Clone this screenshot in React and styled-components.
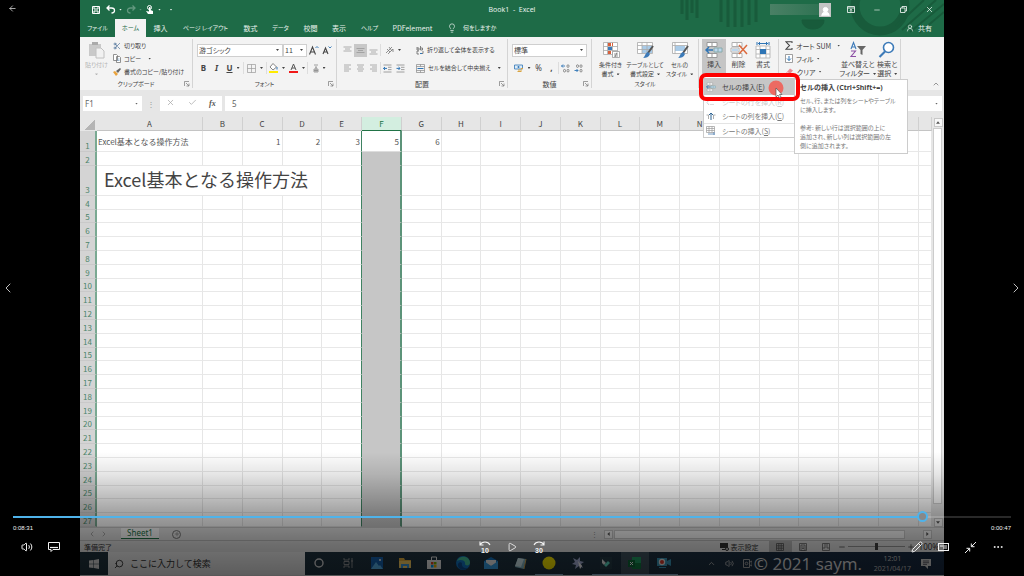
import React from "react";
import styled, { createGlobalStyle, css } from "styled-components";
import {
  ArrowLeft, ChevronLeft, ChevronRight, ChevronUp, Search, Scissors, Lightbulb, Volume2,
  Minus, X, Check, Plus, Play, Pencil, Ellipsis, UserRound,
} from "lucide-react";

const ui = `"Noto Sans", "Noto Sans CJK JP", sans-serif`;
const jp = `"Noto Sans CJK JP", sans-serif`;

const Global = createGlobalStyle`
  * { box-sizing: border-box; }
  body { margin: 0; background: #000; font-family: ${jp}; }
  button, input, select { font: inherit; color: inherit; margin: 0; padding: 0; border: 0; background: none; border-radius: 0; }
  button { cursor: pointer; }
  input, select { outline: 0; min-width: 0; }
`;

const Player = styled.main`
  position: relative;
  display: flex;
  min-height: 100vh;
  overflow: hidden;
  background: #000;
`;
const Side = styled.div`
  flex: 0 0 80px;
  display: grid;
  grid-template-rows: 1fr 16px 1fr;
  justify-items: ${(p) => (p.$end ? "end" : "start")};
  color: #ddd;
`;
const SideButton = styled.button`
  display: flex;
  align-items: center;
  justify-content: center;
  width: ${(p) => (p.$row === 1 ? 24 : 16)}px;
  height: 16px;
  grid-row: ${(p) => p.$row};
`;
const Excel = styled.section`
  position: relative;
  flex: 1;
  min-width: 0;
  display: flex;
  flex-direction: column;
  background: #e6e6e6;
  color: #444;
  font-size: 7px;
  line-height: 10px;
  font-feature-settings: "palt";
`;

/* Title bar and tabs */
const Header = styled.header`
  position: relative;
  background: #1e6b47;
  color: #e8f1ec;
`;
const Pattern = styled.svg`
  position: absolute;
  top: 0;
  right: 0;
`;
const TitleBar = styled.div`
  position: relative;
  display: grid;
  grid-template-columns: 1fr auto 1fr;
  align-items: center;
  height: 19px;
`;
const QuickAccess = styled.div`
  display: flex;
  align-items: center;
  gap: 4px;
  padding-left: 10px;
`;
const QuickButton = styled.button`
  display: flex;
  align-items: center;
  justify-content: center;
  gap: 3px;
  min-width: 12px;
  opacity: ${(p) => (p.$dim ? 0.3 : 1)};
`;
const Title = styled.h1`
  margin: 0;
  font: 400 7px/10px ${ui};
  white-space: pre;
`;
const WindowButtons = styled.div`
  display: flex;
  justify-content: flex-end;
  align-items: center;
  padding-right: 2px;
`;
const Account = styled.div`
  width: 49px;
  height: 11px;
  background: linear-gradient(90deg, #4a8065, #2f7353);
`;
const Avatar = styled.div`
  display: flex;
  align-items: flex-end;
  justify-content: center;
  width: 12px;
  height: 14px;
  margin-right: 7px;
  background: #c4c4c4;
  color: #fff;
`;
const WindowButton = styled.button`
  display: flex;
  justify-content: center;
  width: 26px;
`;
const Tabs = styled.nav`
  position: relative;
  display: flex;
  align-items: stretch;
  height: 18px;
`;
const Tab = styled.button`
  width: ${(p) => p.$w}px;
  font-size: ${(p) => (p.$kana ? 6 : 7)}px;
  white-space: nowrap;
  ${(p) => p.$on && css`background: #f3f3f3; color: #1e6b47;`}
`;
const TellMe = styled.button`
  display: flex;
  align-items: center;
  gap: 6px;
  margin-left: 8px;
  font-size: 6px;
`;
const Share = styled.button`
  display: flex;
  align-items: center;
  gap: 4px;
  margin-left: auto;
  margin-right: 12px;
`;

/* Ribbon */
const Ribbon = styled.div`
  display: flex;
  height: 53px;
  background: #f3f3f3;
`;
const Group = styled.section`
  position: relative;
  flex: 0 0 ${(p) => p.$w}px;
  min-width: 0;
  width: ${(p) => p.$w}px;
  display: flex;
  flex-direction: column;
  margin: 2px 0;
  padding-top: ${(p) => p.$top || 0}px;
  border-right: 1px solid #d4d4d4;
`;
const GroupBody = styled.div`
  flex: 1;
  display: flex;
  align-items: flex-start;
  gap: ${(p) => p.$gap || 0}px;
  padding: 0 ${(p) => p.$pad || 0}px;
  font-size: ${(p) => (p.$small ? 6 : 7)}px;
`;
const GroupLabel = styled.div`
  position: relative;
  height: 8px;
  line-height: 8px;
  font-size: ${(p) => (p.$small ? 6 : 7)}px;
  text-align: center;
`;
const Launcher = styled.button`
  position: absolute;
  right: 2px;
  top: 1px;
  width: 6px;
  height: 6px;
  display: flex;
`;
const Stack = styled.div`
  display: flex;
  flex-direction: column;
  gap: ${(p) => p.$gap || 0}px;
`;
const Line = styled.div`
  display: flex;
  align-items: center;
  height: 14px;
`;
const Command = styled.button`
  display: flex;
  align-items: center;
  gap: 3px;
  height: ${(p) => p.$h || 13}px;
  line-height: 10px;
  white-space: nowrap;
`;
const BigCommand = styled.button`
  flex: none;
  display: flex;
  flex-direction: column;
  align-items: center;
  justify-content: flex-start;
  width: ${(p) => p.$w}px;
  height: ${(p) => (p.$on ? 40 : 38)}px;
  padding-top: 2px;
  line-height: 9px;
  white-space: nowrap;
  color: ${(p) => (p.$dim ? "#b5b5b5" : "#444")};
  background: ${(p) => (p.$on ? "#c5c5c5" : "none")};
  svg { flex: none; margin-bottom: 1px; }
`;
const Caret = styled.span`
  display: inline-block;
  flex: none;
  width: 3px;
  height: 2px;
  margin-left: ${(p) => p.$gap || 0}px;
  background: currentColor;
  clip-path: polygon(0 0, 100% 0, 50% 100%);
  vertical-align: middle;
`;
const Tool = styled.button`
  display: flex;
  flex: none;
  align-items: center;
  justify-content: center;
  gap: 4px;
  width: ${(p) => p.$w || 13}px;
  height: 13px;
  font: ${(p) => (p.$plain ? 400 : 700)} 8px/12px ${ui};
  background: ${(p) => (p.$on ? "#c8c8c8" : "none")};
`;
const Picker = styled.label`
  display: flex;
  align-items: center;
  width: ${(p) => p.$w}px;
  height: 13px;
  padding: 0 3px 0 1px;
  background: #fff;
  border: 1px solid #cfcfcf;
  select { flex: 1; appearance: none; }
`;
const Rule = styled.span`
  width: 1px;
  height: 12px;
  background: #ddd;
`;
const Collapse = styled.button`
  margin: auto 4px 0 auto;
  color: #666;
`;

/* Insert menu */
const Menu = styled.div`
  position: absolute;
  z-index: 3;
  left: 4px;
  top: 36px;
  width: 94px;
  padding-top: 2px;
  background: #fff;
  border: 1px solid #ccc;
`;
const MenuItem = styled.button`
  display: flex;
  align-items: center;
  gap: 6px;
  width: 100%;
  height: ${(p) => (p.$on ? 17 : 14)}px;
  padding-left: 2px;
  white-space: nowrap;
  color: ${(p) => (p.$faint ? "#ccc" : p.$on ? "#444" : "#777")};
  background: ${(p) => (p.$on ? "#c6c6c6" : "none")};
  border-top: ${(p) => (p.$ruled ? "1px solid #e4e4e4" : "0")};
`;
const Marker = styled.div`
  position: absolute;
  z-index: 5;
  left: 0;
  top: 34px;
  width: 101px;
  height: 28px;
  border: 4px solid #fe0000;
  border-radius: 7px;
  pointer-events: none;
`;
const Pointer = styled.svg`
  position: absolute;
  z-index: 6;
  left: 69px;
  top: 41px;
`;
const Tip = styled.aside`
  position: absolute;
  z-index: 4;
  left: 95px;
  top: 40px;
  width: 114px;
  height: 75px;
  padding: 3px 5px;
  background: #fff;
  border: 1px solid #ccc;
  color: #777;
  font-size: 6px;
  line-height: 9px;
  white-space: nowrap;
  h2 { margin: 0 0 3px; font: 700 7px/10px ${ui}; color: #444; }
  p { margin: 0 0 9px; }
`;

/* Formula bar */
const FormulaBar = styled.div`
  display: flex;
  align-items: center;
  gap: 3px;
  margin: 6px 2px 6px 3px;
  height: 15px;
  font: 400 8px/12px ${ui};
  color: #666;
`;
const NameBox = styled.label`
  display: flex;
  align-items: center;
  width: 59px;
  height: 15px;
  padding: 0 4px 0 2px;
  background: #fff;
  input { flex: 1; }
`;
const Dots = styled.span`
  width: 12px;
  text-align: center;
  color: #999;
`;
const EntryTools = styled.div`
  display: flex;
  align-items: center;
  justify-content: space-around;
  width: 62px;
  height: 15px;
  background: #fff;
  color: #aaa;
`;
const FxButton = styled.button`
  font: italic 700 8px/12px "Liberation Serif", serif;
  color: #555;
`;
const FormulaBox = styled.label`
  flex: 1;
  display: flex;
  align-items: center;
  height: 15px;
  padding: 0 4px 0 7px;
  background: #fff;
  input { flex: 1; }
`;

/* Sheet */
const SheetArea = styled.div`
  display: flex;
  background: #e6e6e6;
`;
const Sheet = styled.table`
  flex: 1;
  width: 100%;
  table-layout: fixed;
  border-collapse: separate;
  border-spacing: 0;
  background: #fff;
  font: 400 8px/11px ${jp};
  font-feature-settings: normal;
  color: #555;
  th, td { padding: 0; font-weight: 400; }
`;
const Corner = styled.td`
  background: linear-gradient(135deg, transparent 50%, #b5b5b5 50%) no-repeat right 2px center / 11px 11px, #e6e6e6;
`;
const ColHead = styled.th`
  height: 14px;
  background: ${(p) => (p.$on ? "#d3eee0" : "#e6e6e6")};
  color: ${(p) => (p.$on ? "#217346" : "#444")};
  border-right: 1px solid #d0d0d0;
  border-bottom: 1px solid ${(p) => (p.$on ? "#217346" : "#c4c4c4")};
  line-height: 13px;
`;
const Row = styled.tr`
  height: ${(p) => p.$h}px;
`;
const RowHead = styled.th`
  background: #d4d4d4;
  color: #4b8469;
  vertical-align: bottom;
  border-right: 2px solid #7aa992;
  border-bottom: 1px solid #c9c9c9;
`;
const Cell = styled.td`
  border-right: 1px solid #e6e6e6;
  border-bottom: 1px solid #e8e8e8;
  text-align: ${(p) => (p.$num ? "right" : "left")};
  white-space: nowrap;
  ${(p) => p.$before && css`border-right: 1px solid #3f8262;`}
  ${(p) => p.$sel && css`
    background: ${p.$active ? "#fff" : "#c6c6c6"};
    border-right: 2px solid #5c9379;
    border-bottom-color: ${p.$active ? "#ddd" : "#c6c6c6"};
  `}
  && { padding: 0 ${(p) => (p.$big ? 7 : 1)}px; }
  ${(p) => p.$big && css`font-size: 18px; line-height: 26px; color: #444; vertical-align: top;`}
`;
const ScrollY = styled.div`
  display: flex;
  flex-direction: column;
  align-items: center;
  width: 12px;
  padding: 1px 0 0;
`;
const ScrollX = styled.div`
  flex: 0 0 328px;
  display: flex;
  align-items: center;
  height: 9px;
  margin-right: 12px;
`;
const ScrollButton = styled.button`
  flex: none;
  display: flex;
  align-items: center;
  justify-content: center;
  width: 9px;
  height: 9px;
  background: #f8f8f8;
  border: 1px solid #c8c8c8;
`;
const Arrow = styled.span`
  width: 4px;
  height: 4px;
  background: #555;
  clip-path: ${(p) => ({
    up: "polygon(50% 20%, 100% 80%, 0 80%)",
    down: "polygon(0 20%, 100% 20%, 50% 80%)",
    left: "polygon(20% 50%, 80% 0, 80% 100%)",
    right: "polygon(20% 0, 80% 50%, 20% 100%)",
  })[p.$dir]};
`;
const Thumb = styled.span`
  flex: ${(p) => (p.$y ? "0 1 376px" : 1)};
  align-self: stretch;
  margin: ${(p) => (p.$y ? "1px 2px auto 1px" : "0 18px 0 1px")};
  background: #fff;
  border: 1px solid #ccc;
`;

const SheetTabs = styled.div`
  display: flex;
  align-items: center;
  height: 13px;
  padding-left: 8px;
  border-top: 1px solid #c8c8c8;
  color: #888;
`;
const SheetNav = styled.div`
  display: flex;
  gap: 4px;
  width: 33px;
`;
const SheetTab = styled.button`
  align-self: flex-start;
  width: 38px;
  height: 11px;
  background: #fff;
  color: #217346;
  border-bottom: 1px solid #217346;
  font: 400 8px/10px ${ui};
`;
const AddSheet = styled.button`
  display: flex;
  align-items: center;
  justify-content: center;
  width: 9px;
  height: 9px;
  margin-left: 13px;
  border: 1px solid #777;
  border-radius: 50%;
  color: #666;
`;
const Grip = styled.span`
  margin-left: auto;
  margin-right: 6px;
`;
const StatusBar = styled.div`
  display: flex;
  align-items: center;
  height: 12px;
  padding: 0 5px 0 4px;
  border-top: 1px solid #c0c0c0;
  color: #333;
`;
const ViewSettings = styled.button`
  display: flex;
  align-items: center;
  gap: 2px;
  margin-left: auto;
  margin-right: 10px;
`;
const ViewButton = styled.button`
  display: flex;
  align-items: center;
  justify-content: center;
  width: 23px;
  height: 11px;
  background: ${(p) => (p.$on ? "#bcbcbc" : "none")};
`;
const ZoomRange = styled.input`
  appearance: none;
  width: 57px;
  height: 8px;
  margin: 0 2px;
  background: linear-gradient(#999, #999) center / 100% 1px no-repeat;
  &::-webkit-slider-thumb { appearance: none; width: 3px; height: 7px; background: #444; }
`;
const ZoomValue = styled.span`
  margin-left: 4px;
  font: 400 8px/10px ${ui};
`;

/* Windows taskbar */
const Taskbar = styled.footer`
  position: relative;
  display: flex;
  align-items: stretch;
  height: 23px;
  background: linear-gradient(90deg, #20343f, #1f3342 60%, #182a42);
  color: #ccc;
`;
const Start = styled.button`
  display: flex;
  align-items: center;
  justify-content: center;
  width: 28px;
`;
const TaskSearch = styled.label`
  display: flex;
  align-items: center;
  gap: 6px;
  width: 197px;
  padding-left: 6px;
  background: #f2f2f2;
  color: #222;
  svg { transform: scaleX(-1); }
  input { flex: 1; font: 400 9px/14px ${jp}; }
  input::placeholder { color: #333; opacity: 1; }
`;
const Apps = styled.div`
  display: flex;
  flex: 0 0 373px;
`;
const TaskButton = styled.button`
  flex: 1;
  display: flex;
  align-items: center;
  justify-content: center;
  background: ${(p) => (p.$on ? "#40535f" : "none")};
  border-bottom: 1px solid ${(p) => (p.$open ? "#8fb4d4" : "transparent")};
`;
const Tray = styled.div`
  display: flex;
  align-items: center;
  gap: 10px;
  margin-left: auto;
  padding-right: 13px;
`;
const TrayIcons = styled.div`
  display: flex;
  align-items: center;
  gap: 9px;
  width: 157px;
`;
const Clock = styled.time`
  font: 400 7px/10px ${ui};
  text-align: center;
  color: #c4c4c4;
`;
const Watermark = styled.div`
  position: absolute;
  right: 82px;
  bottom: 0;
  font: 400 17px/23px "Open Sans", sans-serif;
  color: #e6e6e6;
  white-space: nowrap;
`;

/* Playback overlay */
const Overlay = styled.div`
  position: absolute;
  z-index: 10;
  left: 0;
  right: 0;
  bottom: 0;
  height: 124px;
  padding: 59px 13px 0;
  color: #f2f2f2;
  background: linear-gradient(rgba(0,0,0,0), rgba(0,0,0,.1) 18%, rgba(0,0,0,.38) 51%, rgba(0,0,0,.53) 75%, rgba(0,0,0,.62));
`;
const Seek = styled.input`
  display: block;
  appearance: none;
  width: 100%;
  height: 11px;
  background: linear-gradient(90deg, #4fb3ea ${(p) => p.$at}%, rgba(255,255,255,.16) ${(p) => p.$at}%) center / 100% 2px no-repeat;
  &::-webkit-slider-thumb {
    appearance: none;
    box-sizing: border-box;
    width: 11px;
    height: 11px;
    border: 2px solid #4fb3ea;
    border-radius: 50%;
    background: #888;
  }
`;
const Times = styled.div`
  display: flex;
  justify-content: space-between;
  margin-top: 1px;
  font: 400 6px/10px "Liberation Sans", sans-serif;
`;
const Controls = styled.div`
  display: grid;
  grid-template-columns: 1fr auto 1fr;
  margin-top: 6px;
`;
const ControlSet = styled.div`
  display: flex;
  justify-content: ${(p) => (p.$end ? "flex-end" : "flex-start")};
`;
const Control = styled.button`
  display: flex;
  align-items: center;
  justify-content: center;
  width: 27px;
  height: 16px;
`;

const Art = ({ w = 12, h = 12, box, children }) => (
  <svg width={w} height={h} viewBox={box || `0 0 ${w} ${h}`} fill="none" aria-hidden="true">{children}</svg>
);

const Clipboard = () => (
  <Art w={17} h={18}>
    <path d="M1 3h12v12H1z" fill="#c9c9c9" /><path d="M4 1h6v3H4z" fill="#aaa" />
    <path d="M8 7h5l3 3v7H8z" fill="#f1f1f1" stroke="#c0c0c0" />
  </Art>
);
const CopyIcon = () => (
  <Art w={8} h={9}>
    <path d="M.5.5h3l1 1v5h-4zM3.5 2.5h3l1 1v5h-4z" fill="#fff" stroke="#777" strokeWidth=".8" />
    <path d="M4.5 5h2M4.5 6.5h2" stroke="#5b8fc0" strokeWidth=".6" />
  </Art>
);
const Brush = () => (
  <Art w={8} h={8}><path d="M0 4l2-1 3 3-2 2z" fill="#e9a23b" /><path d="M3 3l2 2 3-4-1-1z" fill="#666" /></Art>
);
const LaunchIcon = () => (
  <Art w={6} h={6}><path d="M.5 5V.5H5M2 2l3 3M5 2.5V5H2.5" stroke="#777" strokeWidth=".7" /></Art>
);
const Lines = ({ rows, widths }) => (
  <Art w={9} h={9}>
    {rows.map((y, i) => <path key={y} d={`M${widths[i][0]} ${y}H${widths[i][1]}`} stroke="#999" strokeWidth=".8" />)}
  </Art>
);
const Indent = ({ flip }) => (
  <Art w={9} h={9}>
    <path d="M.5 1h8M5 3.3h3.5M5 5.6h3.5M.5 8h8" stroke="#888" strokeWidth=".8" />
    <path d={flip ? "M.5 4.4H4M2.5 3L4 4.4 2.5 6" : "M4 4.4H.5M2 3L.5 4.4 2 6"} stroke="#2f75b5" />
  </Art>
);
const Wrap = () => (
  <Art w={8} h={9}><path d="M1 1v3h2V2H1M4.500 0v4h2V2h-2M3 5H1v3h2M5 7.500h2V5" stroke="#666" strokeWidth=".8" /><path d="M4 7.500h2" stroke="#2f75b5" /></Art>
);
const Merge = () => (
  <Art w={9} h={9}><path d="M.5.5h8v8h-8zM.5 2.500h8M.5 6.500h8M4.500.5v2M4.500 6.500v2" stroke="#888" strokeWidth=".7" /><path d="M1.500 4.500h6" stroke="#2f75b5" /></Art>
);
const Borders = () => (
  <Art w={9} h={9}><path d="M.5.5h8v8h-8zM4.500.5v8M.5 4.500h8" stroke="#999" strokeWidth=".7" /></Art>
);
const Fill = () => (
  <Art w={9} h={10}><path d="M4 .5l3.500 3.500L4 7 1 4z" fill="#fff" stroke="#666" strokeWidth=".8" /><path d="M8 4v2.500" stroke="#2f75b5" /><path d="M0 8h9v2H0z" fill="#ffeb00" /></Art>
);
const FontColor = () => (
  <Art w={9} h={10}><path d="M2 7l2.500-6L7 7M3 5h3" stroke="#555" /><path d="M0 8h9v2H0z" fill="#f01818" /></Art>
);
const GrowFont = ({ shrink }) => (
  <Art w={10} h={11}>
    <path d={shrink ? "M1 9l2.500-6L6 9M2 7h3" : "M.5 9.500l3-7.500 3 7.500M1.700 7h3.600"} stroke="#444" strokeWidth="1.100" />
    <path d={shrink ? "M6.500 1.500l1.500 1.500 1.500-1.500" : "M6.500 3L8 1.500 9.500 3"} stroke="#2f75b5" strokeWidth=".9" />
  </Art>
);
const Money = () => (
  <Art w={10} h={9}><path d="M.5 1h8v4h-8z" fill="#dcebf7" stroke="#2f75b5" strokeWidth=".8" /><circle cx="4.500" cy="3" r="1" fill="#2f75b5" /><path d="M4 6h4M3.500 7.500h4M7 4.500h2" stroke="#d9a441" /></Art>
);
const Decimal = ({ flip }) => (
  <Art w={10} h={9}>
    <path d={flip ? "M.5 6.500H4M2.500 5L4 6.500 2.500 8" : "M4 2H.5M2 .5L.5 2 2 3.500"} stroke="#2f75b5" strokeWidth=".9" />
    <rect x="6" y=".8" width="2" height="2.600" rx="1" stroke="#666" strokeWidth=".7" />
    <rect x="6" y="5.400" width="2" height="2.600" rx="1" stroke="#666" strokeWidth=".7" />
    <rect x="2.500" y={flip ? 0.8 : 5.4} width="2" height="2.600" rx="1" stroke="#666" strokeWidth=".7" />
  </Art>
);
const CondFormat = () => (
  <Art w={18} h={18}>
    <path d="M1.500 1.500h14v12h-14zM1.500 5.500h14M1.500 9.500h14M5.500 1.500v12M10.500 1.500v12" fill="#fff" stroke="#aaa" strokeWidth=".8" />
    <path d="M6 2h3v3H6zM6 10h3v3H6z" fill="#d9603b" /><path d="M6 6h4v3H6z" fill="#3c7ab8" /><path d="M10 2h1v3h-1z" fill="#d9603b" />
    <path d="M10.500 10.500h7v6h-7z" fill="#fff" stroke="#999" strokeWidth=".8" /><path d="M12 13h4M12 15h4M15 11.500l-2 4.500" stroke="#555" strokeWidth=".6" />
  </Art>
);
const TableFormat = ({ cells }) => (
  <Art w={18} h={18}>
    <path d="M1.500 1.500h15v11h-15z" fill="#fff" stroke="#aaa" strokeWidth=".8" />
    <path d={cells ? "M4 5h10v5H4z" : "M6 5h10v7H6z"} fill="#a9cbe8" />
    <path d={cells ? "M1.500 4.500h15M4 1.500v11" : "M1.500 4.500h15M1.500 8.500h15M6 1.500v11M11 1.500v11"} stroke="#aaa" strokeWidth=".8" />
    <path d="M17 5l-5 7" stroke="#555" strokeWidth="2" /><path d="M12 11l2 2c-1 3-4 4-7 4 2-1 2-5 5-6z" fill="#3c7ab8" />
  </Art>
);
const InsertCells = ({ w = 18 }) => (
  <Art w={w} h={w} box="0 0 18 18">
    <path d="M2 1.500h10v4H2zM7 1.500v4M2 12.500h10v4H2zM7 12.500v4" fill="#fff" stroke="#999" />
    <path d="M9 7h8v4H9zM13 7v4" fill="#bcd7ee" stroke="#8aa" /><path d="M8 9H1M4 6L1 9l3 3" stroke="#2f75b5" strokeWidth="1.500" />
  </Art>
);
const DeleteCells = () => (
  <Art w={18} h={18}>
    <path d="M2 1.500h10v4H2zM7 1.500v4M2 12.500h10v4H2zM7 12.500v4M1 7h8v4H1z" fill="#fff" stroke="#b0b0b0" />
    <path d="M2 8h6v2H2z" fill="#bcd7ee" /><path d="M9 4l8 9M17 4l-8 9" stroke="#dc6a3e" strokeWidth="1.500" />
  </Art>
);
const FormatCells = () => (
  <Art w={18} h={18}>
    <path d="M2 5h14v12H2zM2 8.500h14M2 13h14M6 5v12M12 5v12" fill="#fff" stroke="#bbb" /><path d="M6 8h6v5H6z" fill="#2f75b5" />
    <path d="M3 1v3M15 1v3M4 2.500h10M6 1L4.500 2.500 6 4M12 1l1.500 1.500L12 4" stroke="#2f75b5" />
  </Art>
);
const ColInsert = () => (
  <Art w={10} h={9}><path d="M.5 3h2v4M9.500 3h-2v4" stroke="#999" strokeWidth=".8" /><path d="M5 8V1.500M3 3l2-2 2 2" stroke="#2f6594" /></Art>
);
const RowInsert = () => (
  <Art w={10} h={9}><path d="M4 2.500h4M4 6.500h4" stroke="#ddd" /><path d="M3 2L1 4.500 3 7" stroke="#d0d0d0" /></Art>
);
const SheetInsert = () => (
  <Art w={10} h={9}><path d="M.5.5h8v6h-8zM.5 2.500h8M.5 4.500h8M3 .5v6M6 .5v6" stroke="#999" strokeWidth=".7" /><path d="M2 8h7M8 6v3" stroke="#4e7fae" strokeWidth=".8" /></Art>
);
const FillDown = () => (
  <Art w={8} h={9}><path d="M.5.5h7v8h-7z" fill="#fff" stroke="#888" strokeWidth=".8" /><path d="M4 2v4.500M2 4.500l2 2 2-2" stroke="#2f75b5" /></Art>
);
const Eraser = () => (
  <Art w={9} h={8}><path d="M1 5l4-4.500 3 2L4 7H2z" fill="#e78d94" /><path d="M1 5l1.500-1.500L5 6 4 7H2z" fill="#f6c3c6" /></Art>
);
const SortFilter = () => (
  <Art w={18} h={18}>
    <path d="M2 8l2.500-6.500L7 8M3 6h3" stroke="#3c7ab8" strokeWidth="1.100" /><path d="M2 10h4.500L2 15.500h5" stroke="#8c4fa5" strokeWidth="1.100" />
    <path d="M8 5h9l-3.500 4v5l-2-1V9z" fill="#666" />
  </Art>
);
const FindIcon = () => (
  <Art w={18} h={18}><circle cx="10.500" cy="6.500" r="5" fill="#fff" stroke="#3c7ab8" strokeWidth="1.600" /><path d="M7 10.500L1.500 16" stroke="#3c7ab8" strokeWidth="2.200" /></Art>
);
const WinLogo = () => (
  <Art w={10} h={10}><path d="M0 1.500L4.500 1v3.700H0zM5 .9L10 0v4.700H5zM0 5.300h4.500V9L0 8.500zM5 5.300h5V10l-5-.9z" fill="#ddd" /></Art>
);

const apps = [
  ["Cortana", <Art><circle cx="6" cy="6" r="4" stroke="#ddd" strokeWidth="1.400" /></Art>],
  ["タスク ビュー", <Art><path d="M2 1v2h5V1M2 11V9h5v2M2 4.500h5v3H2zM10 1v10M9 4h2" stroke="#aaa" strokeWidth=".8" /></Art>],
  ["フォト", <Art><path d="M0 0h12v12H0z" fill="#1464b4" /><path d="M0 12l5-7 3 4 1-1 3 4z" fill="#59b6f0" /><circle cx="9" cy="3" r="1" fill="#fff" /></Art>],
  ["エクスプローラー", <Art><path d="M0 1h5l1 2h6v8H0z" fill="#e8b13c" /><path d="M0 4h12v7H0z" fill="#ffd566" /><path d="M2 7h8v4H8V9H4v2H2z" fill="#3e9be0" /></Art>],
  ["ストア", <Art w={14} h={14}><path d="M4.500 4V1h5v3" stroke="#eee" /><path d="M0 4h14v9H0z" fill="#eee" /><path d="M4 6h2.500v2.500H4z" fill="#e54b22" /><path d="M7 6h2.500v2.500H7z" fill="#7fba00" /><path d="M4 9h2.500v2.500H4z" fill="#00a4ef" /><path d="M7 9h2.500v2.500H7z" fill="#ffb900" /></Art>],
  ["Edge", <Art w={14} h={14}><circle cx="7" cy="7" r="7" fill="#1278c8" /><path d="M1 5C3-1 14-1 14 7c0 3-5 3-5 1 1-4-5-5-8-3z" fill="#45c8a0" /><path d="M6 7c-1 4 3 6 6 5-4 4-11 1-10-4 1-2 3-2 4-1z" fill="#0b4d93" /></Art>],
  ["メール", <Art w={14} h={12}><path d="M0 4l7-4 7 4v8H0z" fill="#1476c6" /><path d="M2 3h10v4L7 9 2 7z" fill="#f2f2f2" /><path d="M0 4l7 5 7-5v8H0z" fill="#38a4ec" /></Art>],
  ["メモ帳", <Art w={13} h={13}><path d="M4 1l8 1-2 10-9-2z" fill="#88bccb" /><path d="M4 1l6 1-3 8-6-1z" fill="#d5edf2" /><path d="M12 2l-2 10" stroke="#d4a74e" /></Art>],
  ["付箋", <Art w={14} h={14}><circle cx="7" cy="7" r="6.500" fill="#ffee00" /></Art>, "open"],
  ["ツール", <Art><path d="M1 1l4 2 3-3 0 4 4 1-3 2 2 4-4-2-4 3 1-4-4-1 3-2z" fill="#aab5dc" /><path d="M6 4l4 5-2 3z" fill="#fff" /></Art>],
  ["Filmora", <Art><path d="M0 0h12v12H0z" fill="#253c48" /><path d="M2 2l4 4-2 2-2-2z" fill="#eee" /><path d="M6 10l-2-2 4-4 2 2z" fill="#5ee0c8" /></Art>, "open"],
  ["Excel", <Art w={13} h={12}><path d="M4 0h9v12H4z" fill="#21a366" /><path d="M4 6h9v6H4z" fill="#107c41" /><path d="M0 3h7v7H0z" fill="#0b6a37" /><path d="M2 5l3 3M5 5L2 8" stroke="#fff" /></Art>, "on"],
  ["レコーダー", <Art w={14} h={12}><path d="M0 1h10v8H0zM10 4l4-2v7l-4-2zM2 10h7v1H2z" fill="#3b9cc0" /><circle cx="5" cy="5" r="3.200" fill="#eee" /><circle cx="5" cy="5" r="2" fill="#e03a2c" /></Art>, "open"],
];

const cols = "BCDEFGHIJKLMNOPQRS".split("");
const coveredCols = "OPQRS";
const rowHeight = (n) => (n === 1 ? 21 : n === 3 ? 30 : n % 5 === 0 ? 13 : 14);
const values = { C: 1, D: 2, E: 3, F: 5, G: 6 };

function GridRow({ n }) {
  return (
    <Row $h={rowHeight(n)}>
      <RowHead scope="row">{n}</RowHead>
      <Cell colSpan={n === 3 ? 4 : 1} $big={n === 3}>{n === 1 || n === 3 ? "Excel基本となる操作方法" : ""}</Cell>
      {cols.slice(n === 3 ? 3 : 0).map((c) => (
        <Cell key={c} $num $before={c === "E"} $sel={c === "F"} $active={c === "F" && n === 1}>{n === 1 ? values[c] : ""}</Cell>
      ))}
      <Cell />
    </Row>
  );
}

const Big = ({ w, icon, a, b, ...rest }) => (
  <BigCommand $w={w} {...rest}>{icon}<span>{a}</span><span>{b}<Caret $gap={b ? 3 : 0} /></span></BigCommand>
);

function RibbonGroup({ w, label, covered, launch, top, pad, gap, small, smallLabel, children, extra }) {
  return (
    <Group $w={w} $top={top} aria-label={label}>
      <GroupBody $pad={pad} $gap={gap} $small={small}>{children}</GroupBody>
      <GroupLabel $small={smallLabel}>{!covered && label}{launch && <Launcher aria-label={`${label}の設定`}><LaunchIcon /></Launcher>}</GroupLabel>
      {extra}
    </Group>
  );
}

const tabs = [
  ["ファイル", 35, true], ["ホーム", 31, true, true], ["挿入", 29], ["ページ レイアウト", 61, true], ["数式", 29], ["データ", 31, true],
  ["校閲", 29], ["表示", 28], ["ヘルプ", 33, true], ["PDFelement", 53],
];

const Skip = ({ n, back }) => (
  <Art w={14} h={14}>
    <path d={back ? "M2 5c2-4 8-4 10 0M2 1.500V5h3.500" : "M12 5c-2-4-8-4-10 0M12 1.500V5H8.500"} stroke="currentColor" strokeWidth="1.100" />
    <text x="7" y="12.500" textAnchor="middle" fontSize="7" fontWeight="700" fontFamily="Liberation Sans, sans-serif" fill="currentColor">{n}</text>
  </Art>
);

export default function App() {
  const progress = Math.round((511 / 558) * 1000) / 10;
  return (
    <Player>
      <Global />
      <Side>
        <SideButton $row={1} aria-label="戻る"><ArrowLeft size={9} /></SideButton>
        <SideButton $row={2} aria-label="前へ"><ChevronLeft size={20} strokeWidth={1.3} /></SideButton>
      </Side>

      <Excel>
        <Header>
          <Pattern width="270" height="37" viewBox="0 0 270 37" fill="none" stroke="#185b3b" aria-hidden="true">
            <path d="M8 0v14M13 0v20M18 0v13M23 0v18M47 0v22M54 0v27M61 0v27M68 0v27M75 0v25M82 0v22" strokeWidth="3" />
            <circle cx="206" cy="6" r="25" strokeWidth="9" />
            <path d="M128 20h22c0 12-22 12-22 0z" fill="#185b3b" />
            <path d="M222 26L250 0M228 30L262 0M236 32L270 4M245 33L270 12" strokeWidth="2" />
          </Pattern>
          <TitleBar>
            <QuickAccess>
              <QuickButton aria-label="上書き保存"><Art w={8} h={8}><path d="M.5.5h7v7h-7zM2 .5v2.500h4V.5M2 7.500V5h4v2.500" stroke="#fff" /></Art></QuickButton>
              <QuickButton aria-label="元に戻す"><Art w={10} h={9}><path d="M3.500.5L1 3l2.500 2.500M1 3h4.500c4 0 4 5 0 5" stroke="#fff" strokeWidth="1.300" /></Art><Caret /></QuickButton>
              <QuickButton $dim aria-label="やり直し"><Art w={10} h={9}><path d="M6.500.5L9 3 6.500 5.500M9 3H4.500c-4 0-4 5 0 5" stroke="#fff" strokeWidth="1.300" /></Art><Caret /></QuickButton>
              <QuickButton aria-label="タッチ/マウス モード"><Art w={8} h={9}><circle cx="3.500" cy="2.500" r="2" stroke="#fff" /><path d="M3 2h1.500v3L7 6v3H2L0 6l3 .5z" fill="#fff" /></Art><Caret $gap={1} /></QuickButton>
              <QuickButton aria-label="カスタマイズ"><Caret /></QuickButton>
            </QuickAccess>
            <Title>{"Book1  -  Excel"}</Title>
            <WindowButtons>
              <Account />
              <Avatar><UserRound size={11} fill="#fff" /></Avatar>
              <WindowButton aria-label="リボンの表示オプション"><Art w={8} h={7}><path d="M.5.5h7v6h-7zM.5 2h7M4 6V3.500M2.700 4.500L4 3.300l1.300 1.200" stroke="#fff" strokeWidth=".8" /></Art></WindowButton>
              <WindowButton aria-label="最小化"><Minus size={8} /></WindowButton>
              <WindowButton aria-label="元に戻す (縮小)"><Art w={7} h={7}><path d="M.5 2h4.500v4.500H.5zM2 2V.5h4.500V5H5" stroke="#fff" strokeWidth=".8" /></Art></WindowButton>
              <WindowButton aria-label="閉じる"><X size={9} /></WindowButton>
            </WindowButtons>
          </TitleBar>
          <Tabs>
            {tabs.map(([t, w, kana, on]) => <Tab key={t} $w={w} $kana={kana} $on={on}>{t}</Tab>)}
            <TellMe><Lightbulb size={10} strokeWidth={1.7} />何をしますか</TellMe>
            <Share><UserRound size={8} />共有</Share>
          </Tabs>
        </Header>

        <Ribbon>
          <RibbonGroup w={113} label="クリップボード" launch pad={4} gap={4} small smallLabel>
            <Big w={25} $dim icon={<Clipboard />} a="貼り付け" b="" />
            <Stack>
              <Command><Scissors size={8} color="#446a94" />切り取り</Command>
              <Command><CopyIcon />コピー<Caret $gap={4} /></Command>
              <Command><Brush />書式のコピー/貼り付け</Command>
            </Stack>
          </RibbonGroup>
          <RibbonGroup w={144} label="フォント" launch top={4} pad={4} smallLabel>
            <Stack $gap={4}>
              <Line>
                <Picker $w={86}><select aria-label="フォント名"><option>游ゴシック</option></select><Caret /></Picker>
                <Picker $w={24}><select aria-label="フォント サイズ"><option>11</option></select><Caret /></Picker>
                <Tool aria-label="拡大"><GrowFont /></Tool>
                <Tool aria-label="縮小"><GrowFont shrink /></Tool>
              </Line>
              <Line>
                <Tool>B</Tool><Tool><i>I</i></Tool><Tool $w={20}><u>U</u><Caret /></Tool><Rule />
                <Tool $w={22} aria-label="罫線"><Borders /><Caret /></Tool><Rule />
                <Tool $w={20} aria-label="塗りつぶし"><Fill /><Caret /></Tool>
                <Tool $w={20} aria-label="フォントの色"><FontColor /><Caret /></Tool><Rule />
                <Tool $w={22} aria-label="ふりがな"><Art w={6} h={9}><path d="M1 1h4M2 3h2M1 5h4v3H1zM1 6.500h4M3 3v5" stroke="#888" strokeWidth=".8" /></Art><Caret /></Tool>
              </Line>
            </Stack>
          </RibbonGroup>
          <RibbonGroup w={171} label="配置" launch top={4} pad={4} gap={9} small>
            <Stack $gap={4}>
              <Line>
                <Tool aria-label="上揃え"><Lines rows={[1, 3, 5]} widths={[[0.5, 8.5], [2, 7], [0.5, 8.5]]} /></Tool>
                <Tool $on aria-label="中央揃え"><Lines rows={[2.5, 4.5, 6.5]} widths={[[0.5, 8.5], [2, 7], [0.5, 8.5]]} /></Tool>
                <Tool aria-label="下揃え"><Lines rows={[4, 6, 8]} widths={[[0.5, 8.5], [2, 7], [0.5, 8.5]]} /></Tool>
                <Rule />
                <Tool $w={24} aria-label="方向"><Art w={9} h={9}><path d="M1 7l6-6M2 3l3 3M4 1l3 4M3 8l5-5V6" stroke="#777" strokeWidth=".8" /></Art><Caret /></Tool>
              </Line>
              <Line>
                <Tool aria-label="左揃え"><Lines rows={[1, 3, 5, 7]} widths={[[1, 8], [1, 6], [1, 8], [1, 6]]} /></Tool>
                <Tool aria-label="文字中央"><Lines rows={[1, 3, 5, 7]} widths={[[1, 8], [2, 7], [1, 8], [2, 7]]} /></Tool>
                <Tool aria-label="右揃え"><Lines rows={[1, 3, 5, 7]} widths={[[1, 8], [3, 8], [1, 8], [3, 8]]} /></Tool>
                <Rule />
                <Tool aria-label="字下げ解除"><Indent /></Tool>
                <Tool aria-label="字下げ"><Indent flip /></Tool>
              </Line>
            </Stack>
            <Stack $gap={4}>
              <Command $h={14}><Wrap />折り返して全体を表示する</Command>
              <Command $h={14}><Merge />セルを結合して中央揃え<Caret $gap={4} /></Command>
            </Stack>
          </RibbonGroup>
          <RibbonGroup w={84} label="数値" launch top={4} pad={4}>
            <Stack $gap={4}>
              <Line><Picker $w={75}><select aria-label="表示形式"><option>標準</option></select><Caret /></Picker></Line>
              <Line>
                <Tool $w={20} aria-label="通貨"><Money /><Caret /></Tool>
                <Tool $plain>%</Tool><Tool>,</Tool><Rule />
                <Tool aria-label="小数点以下を増やす"><Decimal /></Tool><Tool aria-label="小数点以下を減らす"><Decimal flip /></Tool>
              </Line>
            </Stack>
          </RibbonGroup>
          <RibbonGroup w={107} label="スタイル" pad={4} small smallLabel>
            <Big w={29} icon={<CondFormat />} a="条件付き" b="書式" />
            <Big w={40} icon={<TableFormat />} a="テーブルとして" b="書式設定" />
            <Big w={29} icon={<TableFormat cells />} a="セルの" b="スタイル" />
          </RibbonGroup>
          <RibbonGroup
            w={80} label="セル" covered pad={3}
            extra={
              <>
                <Menu>
                  <MenuItem $on><InsertCells w={10} /><span>セルの挿入(<u>E</u>)</span></MenuItem>
                  <MenuItem $faint><RowInsert /><span>シートの行を挿入(<u>R</u>)</span></MenuItem>
                  <MenuItem><ColInsert /><span>シートの列を挿入(<u>C</u>)</span></MenuItem>
                  <MenuItem $ruled><SheetInsert /><span>シートの挿入(<u>S</u>)</span></MenuItem>
                </Menu>
                <Tip>
                  <h2>セルの挿入 (Ctrl+Shift+=)</h2>
                  <p>セル、行、または列をシートやテーブル<br />に挿入します。</p>
                  <p>参考: 新しい行は選択範囲の上に<br />追加され、新しい列は選択範囲の左<br />側に追加されます。</p>
                </Tip>
                <Marker />
                <Pointer width="16" height="18" viewBox="0 0 16 18" aria-hidden="true">
                  <circle cx="8" cy="8" r="7.500" fill="#ec6a62" />
                  <path d="M8 8v9l2-2 1.500 3 1.500-1-1.500-2.500H14z" fill="#fff" stroke="#555" strokeWidth=".7" />
                </Pointer>
              </>
            }
          >
            <Big w={24} $on icon={<InsertCells />} a="挿入" b="" />
            <Big w={25} icon={<DeleteCells />} a="削除" b="" />
            <Big w={24} icon={<FormatCells />} a="書式" b="" />
          </RibbonGroup>
          <RibbonGroup w={122} label="編集" covered pad={6} gap={2}>
            <Stack>
              <Command><Art w={8} h={9}><path d="M7 2V.8H1L4.500 4.500 1 8.200h6V7" stroke="#444" strokeWidth="1.100" /></Art>オート SUM<Caret $gap={3} /></Command>
              <Command><FillDown />フィル<Caret /></Command>
              <Command><Eraser />クリア<Caret /></Command>
            </Stack>
            <Big w={31} icon={<SortFilter />} a="並べ替えと" b="フィルター" />
            <Big w={24} icon={<FindIcon />} a="検索と" b="選択" />
          </RibbonGroup>
          <Collapse aria-label="リボンを折りたたむ"><ChevronUp size={8} /></Collapse>
        </Ribbon>

        <FormulaBar>
          <NameBox><input aria-label="名前ボックス" defaultValue="F1" /><Caret /></NameBox>
          <Dots>⋮</Dots>
          <EntryTools>
            <button aria-label="キャンセル"><X size={9} /></button>
            <button aria-label="入力"><Check size={9} /></button>
            <FxButton>fx</FxButton>
          </EntryTools>
          <FormulaBox><input aria-label="数式バー" defaultValue="5" /><Caret /></FormulaBox>
        </FormulaBar>

        <SheetArea>
          <Sheet>
            <colgroup>
              <col width="17" /><col width="106" />
              {cols.map((c) => <col key={c} />)}
              <col width="13" />
            </colgroup>
            <thead>
              <tr>
                <Corner />
                {["A", ...cols].map((c) => (
                  <ColHead key={c} scope="col" aria-label={c} $on={c === "F"}>{coveredCols.includes(c) ? "" : c}</ColHead>
                ))}
                <ColHead />
              </tr>
            </thead>
            <tbody>{Array.from({ length: 27 }, (_, i) => <GridRow key={i} n={i + 1} />)}</tbody>
          </Sheet>
          <ScrollY>
            <ScrollButton aria-label="上へ"><Arrow $dir="up" /></ScrollButton>
            <Thumb $y />
            <ScrollButton aria-label="下へ"><Arrow $dir="down" /></ScrollButton>
          </ScrollY>
        </SheetArea>

        <SheetTabs>
          <SheetNav><ChevronLeft size={8} /><ChevronRight size={8} /></SheetNav>
          <SheetTab>Sheet1</SheetTab>
          <AddSheet aria-label="新しいシート"><Plus size={6} /></AddSheet>
          <Grip>⋮</Grip>
          <ScrollX>
            <ScrollButton aria-label="左へ"><Arrow $dir="left" /></ScrollButton>
            <Thumb />
            <ScrollButton aria-label="右へ"><Arrow $dir="right" /></ScrollButton>
          </ScrollX>
        </SheetTabs>
        <StatusBar>
          準備完了
          <ViewSettings><Art w={9} h={9}><path d="M0 1h8v5H0zM2 7h3v1H2z" fill="#333" /><circle cx="7" cy="7" r="1.500" stroke="#333" fill="#ddd" /></Art>表示設定</ViewSettings>
          <ViewButton $on aria-label="標準"><Art w={8} h={8}><path d="M.5.5h7v7h-7zM.5 2.800h7M.5 5.200h7M2.800.5v7M5.200.5v7" stroke="#555" strokeWidth=".8" /></Art></ViewButton>
          <ViewButton aria-label="ページ レイアウト"><Art w={8} h={8}><path d="M.5.5h7v7h-7zM2 2h4v5.500H2zM3 4h2M3 5.500h2" stroke="#666" strokeWidth=".8" /></Art></ViewButton>
          <ViewButton aria-label="改ページ プレビュー"><Art w={8} h={8}><path d="M.5.5h7v7h-7zM.5 5H3V.5M5 .5V5h2.500" stroke="#666" strokeWidth=".8" /></Art></ViewButton>
          <Minus size={8} />
          <ZoomRange type="range" aria-label="ズーム" defaultValue={50} />
          <Plus size={8} />
          <ZoomValue>100%</ZoomValue>
        </StatusBar>

        <Taskbar>
          <Start aria-label="スタート"><WinLogo /></Start>
          <TaskSearch><Search size={10} /><input aria-label="検索" placeholder="ここに入力して検索" /></TaskSearch>
          <Apps>
            {apps.map(([name, icon, state]) => <TaskButton key={name} aria-label={name} $on={state === "on"} $open={!!state}>{icon}</TaskButton>)}
          </Apps>
          <Tray>
            <TrayIcons>
              <ChevronUp size={9} /><Volume2 size={9} /><Art w={9} h={9}><path d="M.5.5h6v8h-6zM7 3l2-1v5L7 6" stroke="#aaa" /><circle cx="3.500" cy="4.500" r="1.300" stroke="#aaa" /></Art>
            </TrayIcons>
            <Clock>12:01<br />2021/04/17</Clock>
            <Art w={10} h={10}><path d="M0 0h10v7H7v3L4 7H0z" fill="#d5d5d5" /><path d="M2 2h6M2 3.700h6M2 5.400h4" stroke="#334" strokeWidth=".7" /></Art>
          </Tray>
          <Watermark>© 2021 saym.</Watermark>
        </Taskbar>
      </Excel>

      <Side $end>
        <SideButton $row={2} aria-label="次へ"><ChevronRight size={20} strokeWidth={1.3} /></SideButton>
      </Side>

      <Overlay>
        <Seek type="range" aria-label="再生位置" min={0} max={558} defaultValue={511} $at={progress} />
        <Times><span>0:08:31</span><span>0:00:47</span></Times>
        <Controls>
          <ControlSet>
            <Control aria-label="音量"><Volume2 size={12} /></Control>
            <Control aria-label="字幕"><Art><path d="M.5 1.500h11v7H5l-2 2v-2H.5z" stroke="currentColor" /><path d="M2 6.500h8" stroke="currentColor" strokeWidth="1.200" /></Art></Control>
          </ControlSet>
          <ControlSet>
            <Control aria-label="10秒戻る"><Skip n="10" back /></Control>
            <Control aria-label="再生"><Play size={10} /></Control>
            <Control aria-label="30秒進む"><Skip n="30" /></Control>
          </ControlSet>
          <ControlSet $end>
            <Control aria-label="編集"><Pencil size={12} /></Control>
            <Control aria-label="ミニ ビュー"><Art w={11} h={8}><path d="M.5.5h10v7H.5zM2 3h7M5 5h4" stroke="currentColor" strokeWidth="1.100" /></Art></Control>
            <Control aria-label="全画面の終了"><Art w={11} h={11}><path d="M0 11l4.500-4.500M1.500 6.300h3.200v3.200M11 0L6.500 4.500M9.500 4.700H6.300V1.500" stroke="currentColor" /></Art></Control>
            <Control aria-label="その他"><Ellipsis size={12} /></Control>
          </ControlSet>
        </Controls>
      </Overlay>
    </Player>
  );
}
